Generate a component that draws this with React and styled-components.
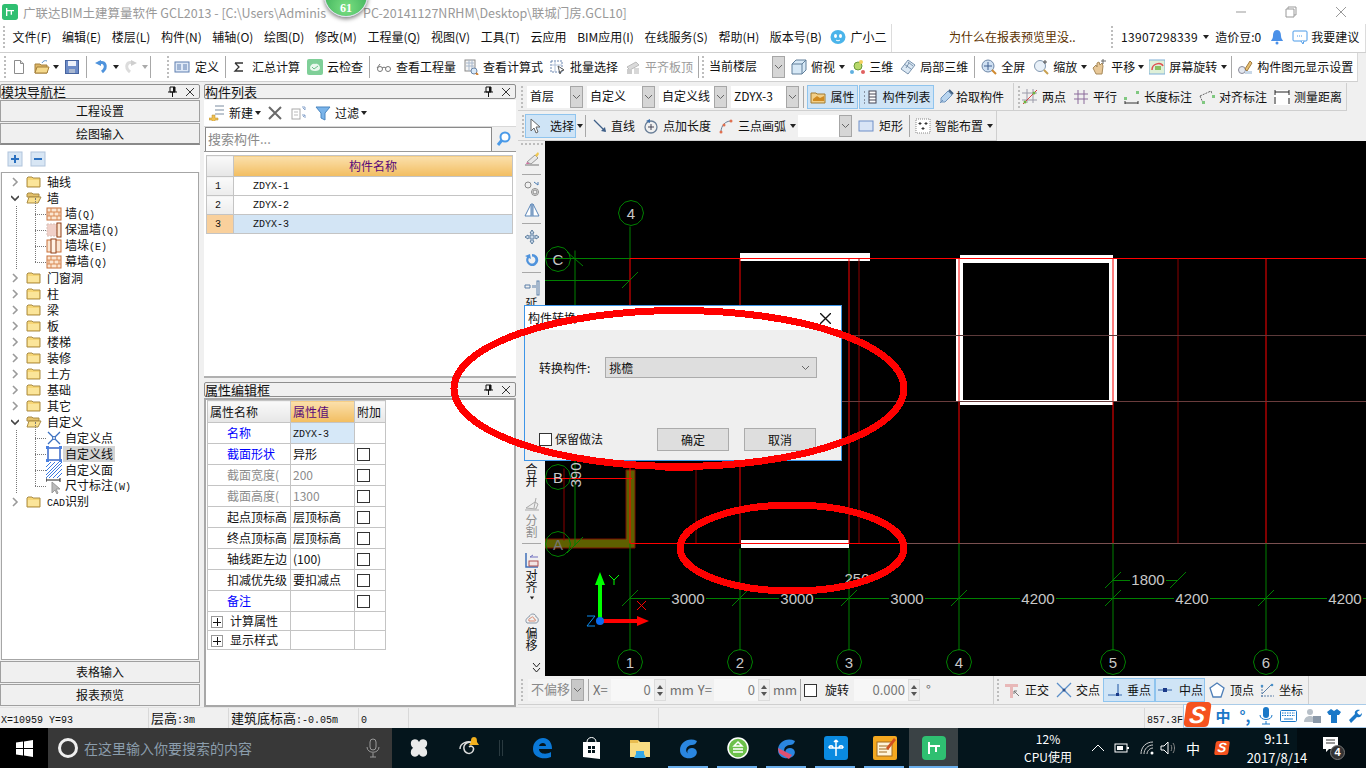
import React from 'react'
import styled, { createGlobalStyle } from 'styled-components'

const UI = '"Noto Sans CJK SC", "Noto Sans", sans-serif'

const Global = createGlobalStyle`
  html, body { margin: 0; padding: 0; background: #f0f0f0; }
  body { font: 12px/16px ${UI}; color: #111; overflow: hidden; }
  * { box-sizing: border-box; }
`

const Page = styled.div`
  position: relative;
  width: 1366px;
  height: 768px;
  overflow: hidden;
  display: flex;
  flex-direction: column;
`

/* ---------- little drawings ---------- */
const brick = (
  <>
    <rect x="1" y="2" width="14" height="12" fill="#fbe6d2" stroke="#c8703a" />
    <path d="M1 6h14M1 10h14M5 2v4M11 2v4M8 6v4M3 6v4M13 6v4M5 10v4M11 10v4" stroke="#d98a55" fill="none" />
  </>
)
const folder = (
  <>
    <path d="M1 4l1-1h4l1 1h7v9H1z" fill="#f7d676" stroke="#a98b45" />
    <rect x="2" y="6" width="11" height="6" fill="#fbe59a" />
  </>
)
const openFolder = (
  <>
    <path d="M1 4l1-1h4l1 1h6v3H1z" fill="#e3c06a" stroke="#a98b45" />
    <path d="M3 7h12l-3 6H1z" fill="#fae08e" stroke="#a98b45" />
  </>
)
const paths = {
  doc: <><path d="M3.5 1.5h6l3 3v10h-9z" fill="#fff" stroke="#8c8c8c" /><path d="M9.5 1.5v3h3" fill="#ddd" stroke="#8c8c8c" /></>,
  open: <><path d="M1 5h5l1 1h6v8H1z" fill="#dcb566" stroke="#a5803a" /><path d="M3 8h12l-2 6H1z" fill="#f5d98c" stroke="#a5803a" /><path d="M8 4c1-2 3-3 5-2" stroke="#5a90c8" fill="none" /></>,
  save: <><rect x="1.5" y="1.5" width="13" height="13" fill="#6d8cc8" stroke="#47649e" /><rect x="4" y="2" width="8" height="5" fill="#eef2fa" /><rect x="5" y="10" width="6" height="4" fill="#aab8d0" /></>,
  undo: <><path d="M5 4c6-2 9 4 3 9" stroke="#4f93dc" strokeWidth="3" fill="none" /><path d="M1 4l6-3v6z" fill="#4f93dc" /></>,
  redo: <><path d="M11 4C5 2 2 8 8 13" stroke="#dcdcdc" strokeWidth="3" fill="none" /><path d="M15 4L9 1v6z" fill="#cfcfcf" /></>,
  table: <><rect x="1" y="3" width="14" height="10" fill="#dfe9f7" stroke="#5f7fb0" /><path d="M3 6h4M3 8h4M3 10h4M9 6h4M9 8h4M9 10h4" stroke="#5f7fb0" /></>,
  sigma: <path d="M4 4h8M4 4l4 4-4 4h8" stroke="#333" strokeWidth="1.3" fill="none" />,
  cloud: <><rect x="0" y="0" width="16" height="16" rx="2" fill="#7fcf98" /><path d="M3 9c0-3 3-5 5-4 3-1 5 2 5 4s-2 3-5 3-5-1-5-3z" fill="#eaf7ee" /><path d="M5 8l2 2 4-3" stroke="#6bbf88" fill="none" /></>,
  glass: <><circle cx="4" cy="10" r="2.5" fill="none" stroke="#777" /><circle cx="12" cy="10" r="2.5" fill="none" stroke="#777" /><path d="M6 9c1-1 3-1 4 0M1 9l3-4" stroke="#777" fill="none" /></>,
  calc: <><rect x="2" y="1" width="10" height="11" fill="#f4f4f4" stroke="#8a8a8a" /><path d="M3 4h8M3 7h8M6 1v11M9 1v11" stroke="#a8b8cc" /><circle cx="11" cy="12" r="3" fill="#d8e8f8" stroke="#6a86a8" /><path d="M13 14l2 2" stroke="#d08030" strokeWidth="2" /></>,
  batch: <><rect x="1" y="2" width="11" height="11" fill="none" stroke="#6a86b0" strokeDasharray="2 1" /><path d="M1 6h11M5 2v11" stroke="#b0c0d8" /><path d="M8 7l6 4-3 1-1 3z" fill="#fff" stroke="#555" /></>,
  flat: <><path d="M2 8l9-5 3 3-9 5z" fill="#dadada" stroke="#bbb" /><rect x="2" y="10" width="5" height="5" fill="#ccc" /><rect x="9" y="9" width="5" height="6" fill="#d8d8d8" /></>,
  cube: <><path d="M1 5l4-4h10v10l-4 4H1z" fill="#d6e8f6" stroke="#607f9a" /><path d="M1 5h10v10M11 5l4-4" fill="none" stroke="#607f9a" /></>,
  three: <><circle cx="9" cy="7" r="4" fill="#b8d86a" stroke="#6a9a3a" /><circle cx="12" cy="3" r="2" fill="#f4d060" /><circle cx="3" cy="13" r="2" fill="#60b0e0" /><circle cx="14" cy="13" r="2" fill="#e06060" /></>,
  local: <><path d="M8 1l7 5-7 9-7-5z" fill="#dbe8f4" stroke="#7a93ad" /><path d="M4 5l7 5M8 3l5 4M6 9l3-5" stroke="#7a93ad" fill="none" /></>,
  full: <><circle cx="7" cy="7" r="6" fill="#cfe0f2" stroke="#6f88a8" /><path d="M7 3v8M3 7h8" stroke="#3f5f90" /><path d="M11 11l4 4" stroke="#d08a30" strokeWidth="2" /></>,
  zoom: <><circle cx="7" cy="7" r="5.5" fill="#e8f0f8" stroke="#8298b0" /><path d="M11 11l4 4" stroke="#c8a050" strokeWidth="2" /><path d="M12 1v4M10 3h4" stroke="#555" /></>,
  pan: <><path d="M2 9l3-3 1 2V4l2-1 1 3 2-2 1 3-1 8H5z" fill="#e8c898" stroke="#a88a5a" /><path d="M12 0v5M10 2h5" stroke="#666" /></>,
  spin: <><rect x="0" y="1" width="16" height="14" fill="#dff0d8" stroke="#7fb0d8" /><path d="M3 11c0-7 9-8 11-4" stroke="#e05050" strokeWidth="1.5" fill="none" /><rect x="6" y="7" width="6" height="4" fill="#8ac060" /></>,
  shown: <><circle cx="5" cy="11" r="3.5" fill="#e4e8f0" stroke="#8a8a98" /><path d="M8 10l5-8 2 2-5 8z" fill="#e8c070" stroke="#a07a40" /><rect x="8" y="12" width="7" height="3" fill="#c8d8e8" /></>,
  dots: <><rect x="1" y="1" width="14" height="14" fill="#fff" stroke="#888" strokeDasharray="1 1" /><path d="M5 4v3M3.5 5.5h3M11 4v3M9.5 5.5h3M8 9v3M6.5 10.5h3" stroke="#333" /></>,
  attr: <><path d="M1 4h5l1 1h8v9H1z" fill="#f2cf88" stroke="#a07a30" /><path d="M3 10l4-3 3 2 4-2v5H3z" fill="#d08a20" /></>,
  clist: <><path d="M2 3h2M2 7h2M2 11h2M2 14h2" stroke="#445" strokeDasharray="1 1" /><rect x="7" y="2" width="7" height="12" fill="#fff" stroke="#445" /><path d="M7 5h7M7 8h7M7 11h7" stroke="#445" /></>,
  drop: <><path d="M10 2l4 4-7 7H3v-4z" fill="#b8d4ee" stroke="#6f93bc" /><path d="M11 1l4 4" stroke="#3f5f80" strokeWidth="2" /><path d="M2 14l3-3" stroke="#6f93bc" /></>,
  two: <><path d="M5 0v14M11 0v14M0 4h15M0 11h15" stroke="#9a9aa8" /><path d="M1 15L15 1" stroke="#d84040" /><circle cx="3" cy="13" r="1.5" fill="#70b040" /><circle cx="12" cy="4" r="1.5" fill="#70b040" /></>,
  para: <path d="M5 1v14M11 1v14M1 5h14M1 10h14" stroke="#8a6a9a" fill="none" />,
  lenmark: <><rect x="0" y="8" width="3" height="3" fill="#80c880" /><rect x="12" y="2" width="3" height="3" fill="#80c880" /><path d="M1 12v3M14 12v3M1 14h13" stroke="#333" /></>,
  alignmark: <><path d="M1 7l3 7M1 7l11-5 1 3" stroke="#666" fill="none" strokeDasharray="2 1" /><rect x="3" y="12" width="3" height="3" fill="#80c880" /><rect x="13" y="6" width="3" height="3" fill="#80c880" /></>,
  measure: <><rect x="0" y="1" width="16" height="15" fill="#fff" /><path d="M1 1v5M15 1v5M1 3h14M1 8v7M15 9v6" stroke="#222" /></>,
  pick: <path d="M4 1v12l3-3 2 5 2-1-2-5h4z" fill="#fff" stroke="#666" />,
  line: <><path d="M2 2l11 11" stroke="#3f5f88" strokeWidth="1.2" /><path d="M14 14l-5-1 4-4z" fill="#3f5f88" /></>,
  addlen: <><circle cx="8" cy="9" r="6" fill="none" stroke="#6a7f98" strokeWidth="1.3" /><path d="M8 6v6M5 9h6" stroke="#445" /><path d="M3 3l4-2v4z" fill="#3f6fa8" /></>,
  arc: <><path d="M3 14C3 8 7 3 13 3" stroke="#6a7f98" fill="none" /><circle cx="3" cy="14" r="1.5" fill="#e07050" /><circle cx="13" cy="3" r="1.5" fill="#e07050" /><circle cx="6" cy="7" r="1.5" fill="#e07050" /></>,
  rect: <rect x="1" y="3" width="14" height="10" fill="#d8e4f6" stroke="#6f8fc8" />,
  brush: <><path d="M1 14h14" stroke="#777" /><path d="M3 11l8-7 3 3-7 6z" fill="#e8e8e8" stroke="#999" /><path d="M11 4l3-3 1 2-2 3z" fill="#f0c850" /><path d="M3 11l3 2-4 0z" fill="#d070a0" /></>,
  pts: <><circle cx="4" cy="5" r="3" fill="none" stroke="#888" /><circle cx="11" cy="12" r="3.5" fill="none" stroke="#888" /><circle cx="11" cy="12" r="2" fill="none" stroke="#888" /><path d="M10 2l4 3M14 5V2" stroke="#4a7ab0" fill="none" /></>,
  mirror: <><path d="M7 2v12H1zM9 2v12h6z" fill="#fff" stroke="#5a86b8" /><path d="M8 1v14" stroke="#5a86b8" /></>,
  move: <path d="M8 1l2 3H9v3h3V6l3 2-3 2V9H9v3h1l-2 3-2-3h1V9H4v1L1 8l3-2v1h3V4H6z" fill="#c8d8ea" stroke="#5f7f9f" />,
  rot: <path d="M8 3a6 6 0 1 1-5 3l-2-1 5-2 1 5-2-1a3.5 3.5 0 1 0 3-1.500z" fill="#4f93dc" />,
  ext: <><path d="M1 5h5v3H1zM9 5v3M11 5v3" stroke="#5a7fa8" fill="none" /><rect x="13" y="1" width="2" height="14" fill="none" stroke="#5a7fa8" /></>,
  cut: <><path d="M2 12l9-6 3 2-2 5z" fill="#eee" stroke="#aaa" /><path d="M1 14h14M12 2l-2 10" stroke="#aaa" /></>,
  alignL: <><path d="M2 1v14h12" stroke="#3f6fb8" strokeWidth="1.5" fill="none" /><rect x="5" y="9" width="9" height="5" fill="#f0e4e4" stroke="#b05050" /><path d="M6 5h8M6 5l3-2" stroke="#7070c0" fill="none" /></>,
  offset: <><path d="M3 13c-3-3 1-6 2-6 1-4 7-4 7 0 3 0 3 6 0 6z" fill="none" stroke="#8a98a8" /><path d="M5 11c-1-2 1-3 2-3 1-2 3-1 3 1 2 0 2 2 1 2z" fill="none" stroke="#d88a70" /></>,
  ortho: <><path d="M0 2h13v3H8v11H5V5H0z" fill="#e8b8b8" /><path d="M9 9l5 5M9 9l3 0M9 9l0 3" stroke="#777" fill="none" /></>,
  cross: <><path d="M1 1l14 14M15 1L1 15" stroke="#5a8ec8" strokeWidth="1.3" /><circle cx="8" cy="8" r="1.5" fill="#30508a" /></>,
  perp: <><path d="M1 13h14M11 2v11" stroke="#3a6cb0" strokeWidth="1.2" /><rect x="9" y="11" width="3" height="3" fill="#1a3a8a" /></>,
  mid: <><path d="M1 8h14" stroke="#5a80b8" strokeWidth="1.3" /><rect x="6" y="6" width="4" height="4" fill="#1a3a8a" /></>,
  vertex: <path d="M8 1l7 5-3 9H4L1 6z" fill="#fff" stroke="#4f7fb8" strokeWidth="1.3" />,
  coord: <><path d="M2 14h13M3 15V3" stroke="#5a7fa8" strokeDasharray="2 1" /><path d="M3 12L13 2" stroke="#5a7fa8" /><circle cx="13" cy="3" r="1.3" fill="#4a90c8" /><circle cx="3" cy="4" r="1.3" fill="#4a90c8" /></>,
  brick,
  folder,
  openFolder,
  thermal: <><rect x="1" y="2" width="10" height="12" fill="#f0d0c8" stroke="#d8c0b8" strokeDasharray="2 1" /><rect x="11" y="1" width="4" height="14" fill="#fbe6d2" stroke="#904018" /></>,
  pier: <><rect x="1" y="2" width="14" height="12" fill="#fbe6d2" stroke="#c8703a" /><rect x="5" y="1" width="5" height="14" fill="#fff2e4" stroke="#904018" /></>,
  pointX: <><path d="M2 2l12 12M14 2L2 14" stroke="#3a6fc0" strokeWidth="1.3" /><circle cx="8" cy="8" r="1.5" fill="#fff" stroke="#3a6fc0" /></>,
  lineBox: <><rect x="2" y="2" width="12" height="12" fill="none" stroke="#1a50c0" strokeWidth="1.3" /><path d="M0 0h3v3H0zM13 0h3v3h-3zM0 13h3v3H0zM13 13h3v3h-3z" fill="#4a80e0" /></>,
  hatch: <path d="M0 5L5 0M0 9l9-9M0 13L13 0M0 16L16 0M3 16L16 3M7 16l9-9M11 16l5-5" stroke="#3a7ae0" />,
  dim: <><path d="M0 2h14M0 0v4M14 0v4" stroke="#222" /><path d="M6 4v11l3-3 2 4 1-1-2-4h4z" fill="#bbb" stroke="#999" /></>,
  robot: <><ellipse cx="8" cy="8" rx="7.5" ry="7" fill="#4ab4ea" /><ellipse cx="5.5" cy="7" rx="1.5" ry="2" fill="#fff" /><ellipse cx="10.5" cy="7" rx="1.5" ry="2" fill="#fff" /><path d="M6 11c1 1 3 1 4 0" stroke="#fff" fill="none" /></>,
  bell: <><path d="M8 1c3 0 4 3 4 6s2 4 2 5H2c0-1 2-2 2-5s1-6 4-6z" fill="#4a90e8" /><circle cx="8" cy="14" r="1.5" fill="#4a90e8" /></>,
  chat: <><rect x="1" y="2" width="14" height="10" rx="1" fill="#fff" stroke="#4a9ae8" /><path d="M9 12l2 3 1-3" fill="#fff" stroke="#4a9ae8" /><path d="M5 7h6" stroke="#4a9ae8" strokeDasharray="1 1" /></>,
  plusBox: <><rect x="1" y="1" width="14" height="14" fill="#d8e6f4" stroke="#b0c4dc" /><path d="M8 4v8M4 8h8" stroke="#2a70c0" strokeWidth="2" /></>,
  minusBox: <><rect x="1" y="1" width="14" height="14" fill="#d8e6f4" stroke="#b0c4dc" /><path d="M4 8h8" stroke="#2a70c0" strokeWidth="2" /></>,
  newc: <><path d="M6 1h9M6 5h9M6 9h9" stroke="#7a8ca0" /><path d="M3 10h3v3h3v2H6v2H3v-2H0v-2h3z" fill="#f0c050" stroke="#b08a30" strokeWidth=".5" /></>,
  del: <path d="M2 2l12 12M14 2L2 14" stroke="#6a6a6a" strokeWidth="2" fill="none" />,
  copy: <><rect x="1" y="4" width="8" height="10" fill="#fff" stroke="#aaa" /><path d="M3 7h4M3 10h4" stroke="#bbb" /><path d="M11 2h3v3M11 10h3v3M14 5l-2-2M14 10l-2 2" stroke="#88a4cc" fill="none" /></>,
  filter: <path d="M1 2h14l-5 6v7l-4-2V8z" fill="#7ab4ea" stroke="#4a86c0" />,
  mag: <><circle cx="9" cy="6" r="4.5" fill="#fff" stroke="#4a9ae8" strokeWidth="2" /><path d="M6 9l-4 5" stroke="#4a9ae8" strokeWidth="3" /></>
}

const Glyph = styled.svg`
  flex: none;
  width: ${p => p.$s || 16}px;
  height: ${p => p.$s || 16}px;
  display: block;
`
const Icon = ({ n, s }) => <Glyph viewBox="0 0 16 16" $s={s}>{paths[n]}</Glyph>

const Mono = styled.span`
  font: 10px/16px "Liberation Mono", monospace;
`

const Grip = styled.i`
  flex: none;
  display: block;
  width: 2px;
  height: ${p => p.$h || 22}px;
  margin-left: ${p => p.$ml || 0}px;
  margin-right: ${p => p.$mr || 0}px;
  background: repeating-linear-gradient(#bdbdbd 0 2px, transparent 2px 4px);
`
const Sep = styled.i`
  flex: none;
  display: block;
  width: 1px;
  height: 22px;
  margin-left: ${p => p.$ml || 0}px;
  background: #a8a8a8;
`
const Caret = styled.i`
  flex: none;
  display: block;
  width: 0;
  height: 0;
  margin-left: ${p => p.$ml ?? 4}px;
  border: 3.5px solid transparent;
  border-bottom: 0;
  border-top: 4px solid ${p => (p.$off ? '#aaa' : '#222')};
`
const Tool = styled.div`
  flex: none;
  display: flex;
  align-items: center;
  height: 24px;
  gap: ${p => p.$gap ?? 4}px;
  margin-left: ${p => p.$ml || 0}px;
  white-space: nowrap;
  letter-spacing: ${p => p.$ls || 0}px;
  color: ${p => (p.$off ? '#9b9b9b' : '#111')};
`
const ActiveTool = styled(Tool)`
  justify-content: center;
  width: ${p => p.$w}px;
  border: 1px solid #8fc4ee;
  background: #cfe4f6;
`
const Combo = styled.div`
  flex: none;
  display: flex;
  width: ${p => p.$w}px;
  height: 22px;
  margin-left: ${p => p.$ml || 0}px;
  background: #fff;
  line-height: 20px;
  padding-left: 3px;
  white-space: nowrap;
  & > span { flex: 1; overflow: hidden; }
`
const ComboBtn = styled.b`
  flex: none;
  width: 13px;
  display: flex;
  align-items: center;
  justify-content: center;
  background: #d6d6d6;
  border: 1px solid #a6a6a6;
`
const Chevron = () => (
  <svg width="9" height="6" viewBox="0 0 9 6"><path d="M1 1l3.5 3.5L8 1" stroke="#666" fill="none" /></svg>
)
const Select = ({ w, ml, children }) => (
  <Combo $w={w} $ml={ml}><span>{children}</span><ComboBtn><Chevron /></ComboBtn></Combo>
)

/* ---------- title and menu ---------- */
const TitleBar = styled.div`
  height: 24px;
  flex: none;
  background: #fff;
  color: #999;
  font-size: 12.5px;
  line-height: 23px;
  display: flex;
  align-items: center;
  padding-left: 2px;
  gap: 5px;
`
const AppLogo = styled.svg`
  width: 16px;
  height: 16px;
  flex: none;
`
const TitleHead = styled.span`
  flex: none;
  width: 302px;
  white-space: nowrap;
`
const TitleTail = styled.span`
  flex: 1;
  margin-left: 33px;
  white-space: nowrap;
`
const WinBtn = styled.svg`
  flex: none;
  width: 12px;
  height: 12px;
  margin-right: 33px;
  stroke: #999;
  fill: none;
  &:last-child { margin-right: 19px; }
`
const MenuRow = styled.div`
  height: 29px;
  flex: none;
  display: flex;
  background: #fff;
  border-bottom: 1px solid #cfcfcf;
`
const MenuBox = styled.div`
  width: 892px;
  display: flex;
  align-items: center;
  padding: 0 0 2px 3px;
  gap: 10.6px;
  border-right: 1px solid #dcdcdc;
  white-space: nowrap;
`
const Tip = styled.div`
  flex: 1;
  padding-left: 57px;
  line-height: 26px;
  color: #5c3200;
`
const AccountBox = styled.div`
  width: 256px;
  display: flex;
  align-items: center;
  padding: 0 0 2px 1px;
  white-space: nowrap;
  border-right: 1px solid #dcdcdc;
`
const Bar = styled.div`
  height: 29px;
  flex: none;
  display: flex;
  align-items: center;
  width: 1358px;
  background: #fff;
  border-right: 1px solid #d8d8d8;
  border-bottom: 1px solid #cfcfcf;
  padding-left: 4px;
`

/* ---------- workspace ---------- */
const Workspace = styled.div`
  flex: 1;
  display: flex;
  min-height: 0;
  background: #f0f0f0;
`
const Column = styled.div`
  flex: none;
  width: ${p => p.$w}px;
  margin-left: ${p => p.$ml || 0}px;
  display: flex;
  flex-direction: column;
`
const DockHead = styled.div`
  flex: none;
  height: 15px;
  margin-top: ${p => p.$mt ?? 2}px;
  display: flex;
  align-items: center;
  font-size: 13px;
  line-height: 14px;
  border: 1px solid #8e8e8e;
  border-radius: 2px;
  background: #f0f0f0;
  padding-right: 5px;
  gap: 9px;
  & > span { flex: 1; white-space: nowrap; }
`
const Pin = () => (
  <svg width="9" height="11" viewBox="0 0 9 11"><path d="M2 1h5v5H2zM0 6h9M4.5 6v5" stroke="#111" fill="none" /><rect x="5" y="1" width="2" height="5" fill="#111" /></svg>
)
const CloseX = ({ s = 8, c = '#333' }) => (
  <svg width={s} height={s} viewBox="0 0 8 8"><path d="M0 0l8 8M8 0L0 8" stroke={c} fill="none" /></svg>
)
const NavBtn = styled.div`
  flex: none;
  height: ${p => p.$h || 22}px;
  margin-top: 1px;
  text-align: center;
  line-height: 20px;
  border: 1px solid #a0a0a0;
  border-bottom: ${p => (p.$on ? '2px solid #8a8a8a' : '1px solid #a0a0a0')};
  background: #f0f0f0;
`
const TreeTools = styled.div`
  flex: none;
  height: 27px;
  display: flex;
  align-items: center;
  padding-left: 7px;
  gap: 7px;
  background: #fff;
`
const TreeBox = styled.div`
  height: 488px;
  flex: none;
  margin: 0 1px;
  padding-top: 1px;
  background: #fff;
  border: 1px solid #a6a6a6;
`
const TreeRow = styled.div`
  position: relative;
  height: 16px;
  display: flex;
  align-items: center;
  white-space: nowrap;
  padding-left: ${p => (p.$child ? 44 : 9)}px;
  background: ${p => (p.$child ? 'repeating-linear-gradient(#777 0 1px, transparent 1px 2px) 14px 0 / 1px 100% no-repeat' : 'none')};
  &::before {
    content: '';
    display: ${p => (p.$child ? 'block' : 'none')};
    position: absolute;
    left: 33px;
    top: 8px;
    width: 11px;
    border-top: 1px dotted #777;
  }
  &::after {
    content: '';
    display: ${p => (p.$child ? 'block' : 'none')};
    position: absolute;
    left: 33px;
    top: -8px;
    height: 16px;
    border-left: 1px dotted #777;
  }
`
const Twist = styled.svg`
  flex: none;
  width: 8px;
  height: 10px;
  margin-right: 7px;
  stroke: #9a9a9a;
  fill: none;
  stroke-width: 1.6;
`
const RowIcon = styled.span`
  display: flex;
  margin-right: ${p => p.$mr}px;
`
const TreeLabel = styled.span`
  padding: 0 ${p => (p.$on ? 2 : 0)}px;
  margin-left: ${p => (p.$on ? -2 : 0)}px;
  background: ${p => (p.$on ? '#d4d4d4' : 'transparent')};
`
const Panel = styled.div`
  flex: ${p => p.$flex || 'none'};
  margin-top: 1px;
  background: #fff;
  border: ${p => (p.$border ? '2px solid #a8a8a8' : '0')};
  ${p => (p.$border ? '' : 'border-bottom: 2px solid #b0b0b0;')}
`
const ListTools = styled.div`
  height: 27px;
  display: flex;
  align-items: center;
  padding-left: 5px;
  background: #fff;
  border-bottom: 1px solid #d8d8d8;
`
const SearchRow = styled.div`
  height: 25px;
  display: flex;
  background: #f4f4f4;
  border-bottom: 1px solid #999;
`
const SearchInput = styled.div`
  flex: 1;
  margin-left: 1px;
  border: 1px solid #8a8a8a;
  border-bottom: 0;
  background: #fff;
  color: #8a8a8a;
  padding-left: 2px;
  font-size: 13px;
  line-height: 22px;
`
const SearchBtn = styled.div`
  width: 24px;
  display: flex;
  align-items: center;
  justify-content: center;
  background: #f0f0f0;
`
const Grid = styled.table`
  border-collapse: collapse;
  table-layout: fixed;
  background: #fff;
  width: ${p => p.$w}px;
  margin: ${p => p.$m};
  & td, & th { border: 1px solid #c4c4c4; padding: 0; font-weight: 400; overflow: hidden; white-space: nowrap; }
`
const HeadCell = styled.th`
  height: ${p => p.$h || 20}px;
  font-size: 12px;
  text-align: ${p => (p.$left ? 'left' : 'center')};
  padding-left: ${p => (p.$left ? 2 : 0)}px !important;
  color: ${p => (p.$hot ? '#5a0a78' : '#111')};
  background: linear-gradient(${p => (p.$hot ? '#fbe0ac, #f2bd60' : '#fafafa, #e6e6e6')});
`
const NumCell = styled.td`
  text-align: left;
  padding: 1px 0 0 8px !important;
  background: ${p => (p.$on ? '#f9d09c' : 'linear-gradient(#fafafa, #ececec)')};
  font: 10px "Liberation Mono", monospace;
`
const NameCell = styled.td`
  padding: 1px 0 0 19px !important;
  background: ${p => (p.$on ? '#d3e5f5' : '#fff')};
  font: 10px "Liberation Mono", monospace;
`
const PropRow = styled.tr`
  height: ${p => p.$h}px;
`
const PropName = styled.td`
  padding-left: ${p => (p.$tree ? 0 : 19)}px !important;
  color: ${p => (p.$c === 'blue' ? '#0000ff' : p.$c === 'gray' ? '#8c8c8c' : '#111')};
  font-size: 12px;
`
const PropVal = styled.td`
  padding-left: 2px !important;
  color: ${p => (p.$gray ? '#8c8c8c' : '#111')};
  background: ${p => (p.$on ? '#d6e8f8' : '#fff')};
  font-size: 12px;
`
const PropChk = styled.td`
  text-align: left;
  padding-left: 2px !important;
`
const Check = styled.i`
  display: block;
  flex: none;
  width: 13px;
  height: 13px;
  margin-left: ${p => p.$ml || 0}px;
  background: #fff;
  border: 1px solid #333;
`
const Expand = styled.i`
  display: inline-block;
  width: 12px;
  height: 12px;
  margin: 0 7px 0 3px;
  border: 1px solid #9a9a9a;
  vertical-align: -2px;
  background:
    linear-gradient(#111, #111) center / 8px 1px no-repeat,
    linear-gradient(#111, #111) center / 1px 8px no-repeat;
`

/* ---------- right side ---------- */
const BandRow = styled.div`
  flex: none;
  display: flex;
  height: ${p => p.$h}px;
  margin-top: ${p => p.$mt || 0}px;
`
const Band = styled.div`
  flex: none;
  display: flex;
  align-items: center;
  width: ${p => p.$w}px;
  padding-left: 3px;
  border-right: 1px solid #cfcfcf;
  border-bottom: 1px solid #cfcfcf;
  background: #f0f0f0;
`
const CanvasRow = styled.div`
  flex: none;
  height: 535px;
  display: flex;
`
const VBar = styled.div`
  flex: none;
  width: 27px;
  display: flex;
  flex-direction: column;
  align-items: center;
  overflow: hidden;
  padding: 2px 0;
`
const VGrip = styled.i`
  display: block;
  width: 22px;
  height: 2px;
  margin-bottom: 5px;
  background: repeating-linear-gradient(90deg, #bdbdbd 0 2px, transparent 2px 4px);
`
const VIcon = styled.div`
  flex: none;
  margin-top: ${p => p.$mt || 0}px;
`
const VLine = styled.i`
  flex: none;
  display: block;
  width: 19px;
  height: 1px;
  background: #a8a8a8;
  margin-top: ${p => p.$mt || 0}px;
`
const VText = styled.div`
  flex: none;
  width: 14px;
  text-align: center;
  line-height: 12px;
  margin-top: ${p => p.$mt || 0}px;
  color: ${p => (p.$off ? '#8f8f8f' : '#111')};
`
const VCaret = styled(Caret)`
  margin-left: 0;
  margin-top: 3px;
  transform: scale(.7);
`
const VMore = styled.svg`
  flex: none;
  width: 9px;
  height: 12px;
  margin: 11px 0 0 9px;
  stroke: #222;
  fill: none;
`
const VFill = styled.div`
  flex: 1;
`
const Drawing = styled.svg`
  flex: 1;
  display: block;
  width: 821px;
  height: 535px;
  background: #000;
`
const NumField = styled.div`
  flex: none;
  display: flex;
  width: ${p => p.$w}px;
  height: 22px;
  margin-left: ${p => p.$ml || 0}px;
  color: #777;
  font-size: 13px;
  line-height: 21px;
  text-align: right;
  & > span { flex: 1; background: #f7f7f7; padding-right: 3px; }
`
const Spin = styled.b`
  flex: none;
  width: 12px;
  display: flex;
  flex-direction: column;
  align-items: center;
  justify-content: space-around;
  padding: 3px 0;
  background: #ededed;
  border: 1px solid #dcdcdc;
  & > i { display: block; border: 3px solid transparent; }
  & > i:first-child { border-top: 0; border-bottom: 4px solid #555; }
  & > i:last-child { border-bottom: 0; border-top: 4px solid #555; }
`
const Field = ({ w, ml, v }) => (
  <NumField $w={w} $ml={ml}><span>{v}</span><Spin><i /><i /></Spin></NumField>
)
const Faint = styled.span`
  flex: none;
  color: #6e6e6e;
  font-size: 13px;
  margin-left: ${p => p.$ml || 0}px;
`
const OffsetSelect = styled(Combo)`
  background: #f4f4f4;
  color: #8a8a8a;
  font-size: 13px;
  & > b { background: #c8c8c8; }
`
const BottomBand = styled(Band)`
  height: 29px;
  border-bottom: 1px solid #cfcfcf;
`

/* ---------- status and task bars ---------- */
const StatusBar = styled.div`
  height: 21px;
  flex: none;
  display: flex;
  background: #f0f0f0;
  border-top: 1px solid #e4e4e4;
  padding-left: 1px;
`
const StatusCell = styled.div`
  flex: none;
  width: ${p => p.$w}px;
  white-space: nowrap;
  line-height: 19px;
  padding-right: 2px;
  border-right: ${p => (p.$last ? '0' : '1px solid #d9d9d9')};
  & + & { padding-left: 2px; }
  font-size: 13px;
  overflow: hidden;
`
const StatusMono = styled.span`
  font: 10px/19px "Liberation Mono", monospace;
`
const Taskbar = styled.div`
  height: 40px;
  flex: none;
  display: flex;
  align-items: center;
  color: #fff;
  background: linear-gradient(90deg, #04151c 0 1297px, #020c11 1297px);
`
const StartBtn = styled.div`
  width: 48px;
  height: 40px;
  flex: none;
  background: #000;
  display: flex;
  align-items: center;
  justify-content: center;
`
const SearchBox = styled.div`
  width: 344px;
  height: 40px;
  flex: none;
  background: #383838;
  display: flex;
  align-items: center;
  padding-left: 10px;
  color: #8b9dac;
  font-size: 14px;
  white-space: nowrap;
  & > span { flex: 1; margin-left: 6px; }
  & > svg { margin-right: 12px; }
`
const Cortana = styled.i`
  flex: none;
  display: block;
  width: 20px;
  height: 20px;
  border-radius: 50%;
  border: 3px solid #eee;
`
const Tile = styled.div`
  position: relative;
  flex: none;
  width: 49px;
  height: 40px;
  margin-left: ${p => p.$ml || 0}px;
  display: flex;
  align-items: center;
  justify-content: center;
  background: ${p => (p.$active ? '#3a4245' : 'transparent')};
  &::after {
    content: '';
    display: ${p => (p.$open ? 'block' : 'none')};
    position: absolute;
    bottom: 0;
    left: ${p => (p.$active ? 0 : 4)}px;
    right: ${p => (p.$active ? 0 : 5)}px;
    height: 2px;
    background: #6aaeec;
  }
`
const TileDivider = styled.i`
  flex: none;
  display: block;
  width: 4px;
  height: 16px;
  margin: 0 14px 0 7px;
  border-left: 1px solid #2a3a40;
  border-right: 1px solid #2a3a40;
`
const TaskPic = styled.svg`
  width: 24px;
  height: 24px;
  display: block;
`
const TrayBit = styled.div`
  position: relative;
  flex: none;
  display: flex;
  flex-direction: column;
  align-items: center;
  justify-content: center;
  width: ${p => p.$w}px;
  margin-left: ${p => p.$ml}px;
  font-size: ${p => p.$fs || 12}px;
  line-height: ${p => p.$lh || 18}px;
  white-space: nowrap;
`
const NotifCount = styled.span`
  position: absolute;
  left: 8px;
  top: 9px;
  width: 15px;
  height: 15px;
  border-radius: 50%;
  background: #333;
  border: 1px solid #777;
  text-align: center;
  font: 700 11px/13px "Liberation Sans", sans-serif;
`

/* ---------- things lying over the window ---------- */
const Badge = styled.div`
  position: absolute;
  left: 324px;
  top: -27px;
  width: 44px;
  height: 44px;
  border-radius: 50%;
  border: 1px solid #dde;
  background: radial-gradient(circle at 50% 80%, #7adf82, #1f9a47);
  box-shadow: 0 2px 4px rgba(0, 0, 0, .5);
  color: #fff;
  font: 700 12px/16px "Liberation Serif", serif;
  text-align: center;
  padding-top: 26px;
`
const Dialog = styled.div`
  position: absolute;
  left: 524px;
  top: 305px;
  width: 318px;
  height: 156px;
  background: #efefef;
  border: 1px solid #3d95e8;
  display: flex;
  flex-direction: column;
`
const DialogTitle = styled.div`
  flex: none;
  height: 24px;
  background: #fff;
  display: flex;
  align-items: center;
  justify-content: space-between;
  padding: 0 10px 0 3px;
`
const DialogBody = styled.div`
  flex: 1;
  display: flex;
  flex-direction: column;
  justify-content: space-between;
  padding: 27px 24px 9px 14px;
`
const FormRow = styled.div`
  display: flex;
  align-items: center;
  white-space: nowrap;
`
const FormSelect = styled.div`
  flex: none;
  display: flex;
  align-items: center;
  justify-content: space-between;
  width: 212px;
  height: 21px;
  margin-left: 15px;
  padding: 0 6px 0 3px;
  background: #dedede;
  border: 1px solid #ababab;
`
const DialogBtn = styled.div`
  flex: none;
  width: 72px;
  height: 23px;
  margin-left: ${p => p.$ml}px;
  background: #dedede;
  border: 1px solid #ababab;
  text-align: center;
  line-height: 21px;
`
const ImeBar = styled.div`
  position: absolute;
  left: 1183px;
  top: 704px;
  width: 183px;
  height: 24px;
  background: #fff;
  border: 1px solid #a9cbe8;
  border-right: 0;
  display: flex;
  align-items: center;
  padding-left: 27px;
  color: #1a78c8;
`
const ImeGlyph = styled.b`
  flex: none;
  width: ${p => p.$w || 22}px;
  display: flex;
  justify-content: center;
  font: 700 15px/20px ${UI};
`
const SogouLogo = styled.div`
  position: absolute;
  left: ${p => p.$x}px;
  top: ${p => p.$y}px;
  width: ${p => p.$s}px;
  height: ${p => p.$s}px;
  border-radius: ${p => p.$s / 6}px;
  background: #f5521e;
  transform: skewX(-8deg);
  color: #fff;
  font: italic 700 ${p => p.$s * 0.95}px/${p => p.$s}px "Liberation Sans", sans-serif;
  text-align: center;
`
const Notes = styled.svg`
  position: absolute;
  left: 0;
  top: 0;
  width: 1366px;
  height: 768px;
  pointer-events: none;
`

/* ---------- data ---------- */
const menus = ['文件(F)', '编辑(E)', '楼层(L)', '构件(N)', '辅轴(O)', '绘图(D)', '修改(M)', '工程量(Q)', '视图(V)', '工具(T)', '云应用', 'BIM应用(I)', '在线服务(S)', '帮助(H)', '版本号(B)']

const tree = [
  { t: '轴线' },
  { t: '墙', open: true },
  { t: '墙', m: '(Q)', i: 'brick' },
  { t: '保温墙', m: '(Q)', i: 'thermal' },
  { t: '墙垛', m: '(E)', i: 'pier' },
  { t: '幕墙', m: '(Q)', i: 'brick' },
  { t: '门窗洞' }, { t: '柱' }, { t: '梁' }, { t: '板' }, { t: '楼梯' }, { t: '装修' }, { t: '土方' }, { t: '基础' }, { t: '其它' },
  { t: '自定义', open: true },
  { t: '自定义点', i: 'pointX' },
  { t: '自定义线', i: 'lineBox', on: true },
  { t: '自定义面', i: 'hatch' },
  { t: '尺寸标注', m: '(W)', i: 'dim' },
  { t: '识别', pre: 'CAD' }
]

const props = [
  ['名称', 'ZDYX-3', 'blue', 'mono'],
  ['截面形状', '异形', 'blue', '', true],
  ['截面宽度(', '200', 'gray', 'gray', true],
  ['截面高度(', '1300', 'gray', 'gray', true],
  ['起点顶标高', '层顶标高', '', '', true],
  ['终点顶标高', '层顶标高', '', '', true],
  ['轴线距左边', '(100)', '', '', true],
  ['扣减优先级', '要扣减点', '', '', true],
  ['备注', '', 'blue', '', true]
]

const RED = '#ff0000'
const DARK = '#8b0000'
const GREEN = '#008000'

const segs = [
  [630, 226, 630, 258, GREEN], [545, 258, 630, 258, GREEN], [545, 280, 630, 280, GREEN], [575, 250, 575, 545, GREEN],
  [630, 258, 1366, 258, RED], [630, 258, 630, 543, RED], [740, 258, 740, 543, RED], [849, 258, 849, 543, RED],
  [859, 258, 859, 543, DARK], [696, 468, 696, 543, DARK], [564, 468, 564, 540, DARK], [1178, 258, 1178, 543, DARK],
  [959, 258, 959, 543, RED], [1113, 258, 1113, 543, RED], [1266, 258, 1266, 543, RED],
  [842, 335, 1366, 335, '#5c3a3a'], [842, 401, 1366, 401, '#6a3c3c'], [630, 543, 905, 543, RED], [905, 543, 1366, 543, '#7a5050'],
  [545, 478, 632, 478, RED],
  [630, 543, 630, 650, GREEN], [740, 548, 740, 650, GREEN], [849, 548, 849, 650, GREEN], [959, 543, 959, 650, GREEN], [1113, 543, 1113, 650, GREEN], [1266, 543, 1266, 650, GREEN],
  [630, 598, 1366, 598, GREEN], [1113, 580, 1178, 580, GREEN]
]
const ticks = [[630, 598], [740, 598], [849, 598], [959, 598], [1113, 598], [1266, 598], [1113, 580], [1178, 580], [630, 280], [575, 545]]
const bubbles = [[631, 213, '4'], [558, 259, 'C'], [558, 477, 'B'], [558, 544, 'A'], [630, 662, '1'], [740, 662, '2'], [849, 662, '3'], [959, 662, '4'], [1113, 662, '5'], [1266, 662, '6']]
const dims = [[688, '3000'], [797, '3000'], [907, '3000'], [1038, '4200'], [1192, '4200'], [1345, '4200']]

const ring = (cx, cy, r) => Array.from({ length: 12 }, (_, i) => {
  const a = (i / 12) * Math.PI * 2
  return `${(cx + r * Math.cos(a)).toFixed(1)},${(cy + r * Math.sin(a)).toFixed(1)}`
}).join(' ')

const CadText = styled.text`
  font: 15px "Liberation Sans", sans-serif;
  fill: ${p => p.$dim ? '#777' : '#c8c8c8'};
  text-anchor: middle;
  dominant-baseline: central;
`

const CadView = () => (
  <Drawing viewBox="545 141 821 535">
    <rect x="740" y="253" width="130" height="8" fill="#fff" />
    <path d="M960 255h153v3h4v143h-4v4H960v-4h-4V258h4z M963 263v137h146V263z" fill="#fff" fillRule="evenodd" />
    <rect x="741" y="540" width="108" height="8" fill="#fff" />
    <rect x="665" y="468" width="28" height="3" fill={RED} />
    <path d="M626 470h9v78H545v-9h81z" fill="#5e6000" stroke="#7a1000" />
    {segs.map((s, i) => <line key={i} x1={s[0]} y1={s[1] + 0.5} x2={s[2]} y2={s[3] + 0.5} stroke={s[4]} />)}
    {ticks.map((t, i) => <line key={i} x1={t[0] - 8} y1={t[1] + 8} x2={t[0] + 8} y2={t[1] - 8} stroke={GREEN} />)}
    <line x1="567" y1="252" x2="583" y2="266" stroke={GREEN} />
    {bubbles.map((b, i) => (
      <g key={i}>
        <polygon points={ring(b[0], b[1], 12.5)} fill="none" stroke={GREEN} />
        <CadText x={b[0]} y={b[1]} $dim={b[2] === 'A'}>{b[2]}</CadText>
      </g>
    ))}
    {dims.map((d, i) => (
      <g key={i}>
        <rect x={d[0] - 18} y="590" width="36" height="16" fill="#000" />
        <CadText x={d[0]} y="598">{d[1]}</CadText>
      </g>
    ))}
    <rect x="1130" y="572" width="36" height="16" fill="#000" />
    <CadText x="1148" y="579">1800</CadText>
    <CadText x="857" y="578">250</CadText>
    <CadText x="575" y="475" transform="rotate(-90 575 475)">390</CadText>
    <path d="M598 621V585h-3l5-13 5 13h-3v36z" fill="#00ff00" />
    <path d="M600 619h37v-3l12 5-12 5v-3h-37z" fill={RED} />
    <circle cx="600" cy="621" r="4" fill="#0a6cf0" />
    <path d="M609 575l5 5 5-5M614 580v5" stroke="#00ff00" fill="none" />
    <path d="M637 601l9 9M646 601l-9 9" stroke={RED} fill="none" />
    <path d="M587 616h8l-8 10h8" stroke="#0a8cf0" fill="none" />
  </Drawing>
)

const WinLogo = () => (
  <svg width="17" height="17" viewBox="0 0 17 17"><path d="M0 2.5l7-1v6.5H0zM8 1.4L17 0v8H8zM0 9h7v6.5l-7-1zM8 9h9v8l-9-1.4z" fill="#fff" /></svg>
)

const apps = {
  fan: <path d="M12 12C7 14 3 11 4 6c1-3 6-4 8 0 2-4 7-3 8 0 1 5-3 8-8 6zm0 0c5-2 9 1 8 6-1 3-6 4-8 0-2 4-7 3-8 0-1-5 3-8 8-6z" fill="#eaeaea" />,
  swirl: <><path d="M4 13c0-6 8-9 13-6-5-2-10 1-9 6s7 6 9 2-2-6-4-4" stroke="#ddd" strokeWidth="1.5" fill="none" /><path d="M18 1c3 0 3 3 3 5l2 3H13l2-3c0-2 0-5 3-5z" fill="#f2b01e" /></>,
  edge: <path d="M3 13C3 6 8 2 13 2c6 0 9 5 9 11H9c0 5 7 6 12 3v5c-7 3-18 1-18-8zm6-3h7c0-4-6-4-7 0z" fill="#0a78d7" />,
  store: <><path d="M4 6h17v17l-17-2z" fill="#fff" /><path d="M8 6c0-6 9-6 9 0" stroke="#fff" fill="none" /><path d="M9 10h3v3H9zM13 10h3v3h-3zM9 14h3v3H9zM13 14h3v3h-3z" fill="#04151c" /></>,
  files: <><path d="M2 4h8l2 2h10v15H2z" fill="#f8dc82" /><path d="M2 4h8v3H2z" fill="#e8bc50" /><path d="M8 15h8v3l2 4H6l2-4z" fill="#35a8e8" /></>,
  gcloud: <path d="M20 5C12 1 3 6 3 14s9 10 14 7 3-9-2-9-6 5-3 6c-5-2-3-9 3-9 2 0 4-1 5-4z" fill="#2a86e0" />,
  globe: <><circle cx="12" cy="12" r="10" fill="#6cc04a" stroke="#fff" strokeWidth="1.5" /><path d="M8 10l4-4 4 4zM7 13h10M7 16h10" stroke="#fff" strokeWidth="1.5" fill="none" /></>,
  gband: <><path d="M20 5C12 1 3 6 3 14s9 10 14 7 3-9-2-9-6 5-3 6c-5-2-3-9 3-9 2 0 4-1 5-4z" fill="#2a86e0" /><path d="M3 12l14 7-3 4-10-6z" fill="#e05070" /></>,
  plus: <><rect x="0" y="0" width="24" height="24" rx="3" fill="#0a8ae0" /><path d="M12 4v16M5 12h14M12 4l-2 2M12 4l2 2M5 12c0-3 4-3 4 0M19 12c0-3-4-3-4 0" stroke="#fff" strokeWidth="1.5" fill="none" /></>,
  note: <><rect x="0" y="0" width="24" height="24" rx="2" fill="#f4a820" /><rect x="4" y="6" width="15" height="14" fill="#fff3d8" stroke="#a06a20" /><path d="M6 10h10M6 13h10M6 16h8" stroke="#a06a20" /><path d="M13 12l8-10 2 2-8 10z" fill="#d05020" /></>,
  app: <><rect x="0" y="0" width="24" height="24" rx="4" fill="#2fbf71" /><path d="M7 6v12M7 10h11M14 10v6" stroke="#fff" strokeWidth="2" fill="none" /></>
}
const Pic = ({ n }) => <TaskPic viewBox="0 0 24 24">{apps[n]}</TaskPic>

export default function App() {
  return (
    <Page>
      <Global />
      <TitleBar>
        <AppLogo viewBox="0 0 24 24">{apps.app}</AppLogo>
        <TitleHead>广联达BIM土建算量软件 GCL2013 - [C:\Users\Adminis</TitleHead>
        <TitleTail>PC-20141127NRHM\Desktop\联城门房.GCL10]</TitleTail>
        <WinBtn viewBox="0 0 12 12"><path d="M1 6h10" /></WinBtn>
        <WinBtn viewBox="0 0 12 12"><path d="M1 3h8v8H1zM3 3V1h8v8H9" /></WinBtn>
        <WinBtn viewBox="0 0 12 12"><path d="M1 1l10 10M11 1L1 11" /></WinBtn>
      </TitleBar>

      <MenuRow>
        <MenuBox>
          <Grip $mr={-3} />
          {menus.map(m => <span key={m}>{m}</span>)}
          <Tool $ml={-2}><Icon n="robot" />广小二</Tool>
        </MenuBox>
        <Tip>为什么在报表预览里没..</Tip>
        <AccountBox>
          <Grip />
          <Tool $ml={8} $ls={0.35}>13907298339</Tool>
          <Caret $ml={5} />
          <Tool $ml={6}>造价豆:0</Tool>
          <Tool $ml={8}><Icon n="bell" /></Tool>
          <Tool $ml={7} $gap={3}><Icon n="chat" />我要建议</Tool>
        </AccountBox>
      </MenuRow>

      <Bar>
        <Grip />
        <Tool $ml={5}><Icon n="doc" /></Tool>
        <Tool $ml={7}><Icon n="open" /></Tool><Caret $ml={3} />
        <Tool $ml={5}><Icon n="save" /></Tool>
        <Sep $ml={6} />
        <Tool $ml={7}><Icon n="undo" /></Tool><Caret $ml={3} />
        <Tool $ml={3}><Icon n="redo" /></Tool><Caret $ml={4} $off />
        <Sep $ml={2} />
        <Grip $ml={16} />
        <Tool $ml={5} $gap={5}><Icon n="table" />定义</Tool>
        <Sep $ml={6} />
        <Tool $ml={5} $gap={5}><Icon n="sigma" />汇总计算</Tool>
        <Tool $ml={7}><Icon n="cloud" />云检查</Tool>
        <Sep $ml={6} />
        <Tool $ml={6}><Icon n="glass" />查看工程量</Tool>
        <Tool $ml={7}><Icon n="calc" />查看计算式</Tool>
        <Tool $ml={7}><Icon n="batch" />批量选择</Tool>
        <Tool $ml={7} $off><Icon n="flat" />平齐板顶</Tool>
        <Sep $ml={5} />
        <Grip $ml={3} />
        <Select w={79} ml={2}>当前楼层</Select>
        <Tool $ml={6}><Icon n="cube" />俯视</Tool><Caret />
        <Tool $ml={4}><Icon n="three" />三维</Tool>
        <Tool $ml={7}><Icon n="local" />局部三维</Tool>
        <Sep $ml={6} />
        <Tool $ml={6}><Icon n="full" />全屏</Tool>
        <Tool $ml={8}><Icon n="zoom" />缩放</Tool><Caret />
        <Tool $ml={4}><Icon n="pan" />平移</Tool><Caret $ml={3} />
        <Tool $ml={5}><Icon n="spin" />屏幕旋转</Tool><Caret />
        <Sep $ml={4} />
        <Tool $ml={5}><Icon n="shown" />构件图元显示设置</Tool>
      </Bar>

      <Workspace>
        <Column $w={200}>
          <DockHead><span>模块导航栏</span><Pin /><CloseX /></DockHead>
          <NavBtn>工程设置</NavBtn>
          <NavBtn $on>绘图输入</NavBtn>
          <TreeTools><Icon n="plusBox" /><Icon n="minusBox" /></TreeTools>
          <TreeBox>
            {tree.map(r => {
              const isChild = !!r.i
              return (
                <TreeRow key={r.t + (r.m || '')} $child={isChild}>
                  {!isChild && (
                    <Twist viewBox="0 0 8 10">
                      {r.open ? <path d="M0 3l4 4 4-4" stroke="#444" /> : <path d="M2 1l4 4-4 4" />}
                    </Twist>
                  )}
                  <RowIcon $mr={isChild ? 3 : 5}><Icon n={r.i || (r.open ? 'openFolder' : 'folder')} /></RowIcon>
                  <TreeLabel $on={r.on}>{r.pre && <Mono>{r.pre}</Mono>}{r.t}{r.m && <Mono>{r.m}</Mono>}</TreeLabel>
                </TreeRow>
              )
            })}
          </TreeBox>
          <NavBtn>表格输入</NavBtn>
          <NavBtn>报表预览</NavBtn>
        </Column>

        <Column $w={312} $ml={4}>
          <DockHead><span>构件列表</span><Pin /><CloseX /></DockHead>
          <Panel>
            <ListTools>
              <Tool $gap={4} $ml={0}><Icon n="newc" />新建</Tool><Caret $ml={2} />
              <Tool $ml={6}><Icon n="del" /></Tool>
              <Tool $ml={8}><Icon n="copy" /></Tool>
              <Tool $ml={8} $gap={4}><Icon n="filter" />过滤</Tool><Caret $ml={2} />
            </ListTools>
            <SearchRow>
              <SearchInput>搜索构件...</SearchInput>
              <SearchBtn><Icon n="mag" /></SearchBtn>
            </SearchRow>
            <Grid $w={306} $m="3px 2px 142px 2px">
              <colgroup><col width="27" /><col width="279" /></colgroup>
              <thead><tr><HeadCell $h={21} /><HeadCell $h={21} $hot>构件名称</HeadCell></tr></thead>
              <tbody>
                {['ZDYX-1', 'ZDYX-2', 'ZDYX-3'].map((n, i) => (
                  <PropRow key={n} $h={19}>
                    <NumCell $on={i === 2}>{i + 1}</NumCell>
                    <NameCell $on={i === 2}>{n}</NameCell>
                  </PropRow>
                ))}
              </tbody>
            </Grid>
          </Panel>
          <DockHead $mt={4}><span>属性编辑框</span><Pin /><CloseX /></DockHead>
          <Panel $border $flex="1">
            <Grid $w={178} $m="0 0 0 1px">
              <colgroup><col width="83" /><col width="64" /><col width="31" /></colgroup>
              <thead>
                <tr><HeadCell $left $h={22}>属性名称</HeadCell><HeadCell $left $hot $h={22}>属性值</HeadCell><HeadCell $left $h={22}>附加</HeadCell></tr>
              </thead>
              <tbody>
                {props.map(p => (
                  <PropRow key={p[0]} $h={21}>
                    <PropName $c={p[2]}>{p[0]}</PropName>
                    <PropVal $gray={p[3] === 'gray'} $on={p[3] === 'mono'}>
                      {p[3] === 'mono' ? <Mono>{p[1]}</Mono> : p[1]}
                    </PropVal>
                    <PropChk>{p[4] && <Check />}</PropChk>
                  </PropRow>
                ))}
                {['计算属性', '显示样式'].map(t => (
                  <PropRow key={t} $h={19}>
                    <PropName $tree><Expand />{t}</PropName><PropVal /><PropChk />
                  </PropRow>
                ))}
              </tbody>
            </Grid>
          </Panel>
        </Column>

        <Column $w={848} $ml={2}>
          <BandRow $h={28} $mt={1}>
            <Band $w={496}>
              <Grip />
              <Select w={56} ml={4}>首层</Select>
              <Select w={68} ml={4}>自定义</Select>
              <Select w={68} ml={4}>自定义线</Select>
              <Select w={68} ml={4}>ZDYX-3</Select>
              <Sep $ml={4} />
              <ActiveTool $w={51} $ml={3}><Icon n="attr" />属性</ActiveTool>
              <ActiveTool $w={75} $ml={1}><Icon n="clist" />构件列表</ActiveTool>
              <Tool $ml={4} $gap={2}><Icon n="drop" />拾取构件</Tool>
            </Band>
            <Band $w={333}>
              <Grip $ml={1} />
              <Tool $ml={2}><Icon n="two" />两点</Tool>
              <Tool $ml={7}><Icon n="para" />平行</Tool>
              <Tool $ml={7}><Icon n="lenmark" />长度标注</Tool>
              <Tool $ml={7}><Icon n="alignmark" />对齐标注</Tool>
              <Tool $ml={7}><Icon n="measure" />测量距离</Tool>
            </Band>
          </BandRow>
          <BandRow $h={30}>
            <Band $w={479}>
              <Grip $ml={1} />
              <ActiveTool $w={51} $ml={1} $gap={7}><Icon n="pick" />选择</ActiveTool><Caret $ml={1} />
              <Sep $ml={2} />
              <Tool $ml={6} $gap={3}><Icon n="line" />直线</Tool>
              <Tool $ml={8}><Icon n="addlen" />点加长度</Tool>
              <Tool $ml={7}><Icon n="arc" />三点画弧</Tool><Caret />
              <Select w={54} ml={2}>{' '}</Select>
              <Tool $ml={6} $gap={5}><Icon n="rect" />矩形</Tool>
              <Sep $ml={6} />
              <Tool $ml={5}><Icon n="dots" />智能布置</Tool><Caret />
            </Band>
          </BandRow>
          <CanvasRow>
            <VBar>
              <VGrip />
              <VIcon $mt={1}><Icon n="brush" /></VIcon>
              <VLine $mt={7} />
              <VIcon $mt={5}><Icon n="pts" /></VIcon>
              <VIcon $mt={6}><Icon n="mirror" /></VIcon>
              <VLine $mt={5} />
              <VIcon $mt={5}><Icon n="move" /></VIcon>
              <VIcon $mt={6}><Icon n="rot" /></VIcon>
              <VLine $mt={5} />
              <VIcon $mt={7}><Icon n="ext" /></VIcon>
              <VText $mt={1}>延</VText>
              <VFill />
              <VText>合<br />并</VText>
              <VIcon $mt={9}><Icon n="cut" /></VIcon>
              <VText $mt={2} $off>分<br />割</VText>
              <VLine $mt={5} />
              <VIcon $mt={8}><Icon n="alignL" /></VIcon>
              <VText $mt={1}>对<br />齐</VText>
              <VCaret />
              <VIcon $mt={10}><Icon n="offset" /></VIcon>
              <VText $mt={1}>偏<br />移</VText>
              <VMore viewBox="0 0 9 12"><path d="M1 1l3.5 4L8 1M1 6l3.5 4L8 6" /></VMore>
            </VBar>
            <CadView />
          </CanvasRow>
          <BandRow $h={29}>
            <BottomBand $w={476}>
              <Grip />
              <OffsetSelect $w={56} $ml={5}><span>不偏移</span><ComboBtn><Chevron /></ComboBtn></OffsetSelect>
              <Sep $ml={4} />
              <Faint $ml={4}>X=</Faint>
              <Field w={55} ml={3} v="0" />
              <Faint $ml={4}>mm</Faint>
              <Faint $ml={4}>Y=</Faint>
              <Field w={56} ml={2} v="0" />
              <Faint $ml={3}>mm</Faint>
              <Sep $ml={3} />
              <Check $ml={3} />
              <Tool $ml={8}>旋转</Tool>
              <Field w={66} ml={5} v="0.000" />
              <Faint $ml={6}>°</Faint>
            </BottomBand>
            <BottomBand $w={315}>
              <Grip />
              <Tool $ml={6}><Icon n="ortho" />正交</Tool>
              <Tool $ml={7}><Icon n="cross" />交点</Tool>
              <ActiveTool $w={52} $ml={3}><Icon n="perp" />垂点</ActiveTool>
              <ActiveTool $w={50} $gap={6}><Icon n="mid" />中点</ActiveTool>
              <Tool $ml={4} $gap={5}><Icon n="vertex" />顶点</Tool>
              <Tool $ml={5}><Icon n="coord" />坐标</Tool>
            </BottomBand>
          </BandRow>
        </Column>
      </Workspace>

      <StatusBar>
        <StatusCell $w={148}><StatusMono>X=10959 Y=93</StatusMono></StatusCell>
        <StatusCell $w={80}>层高<StatusMono>:3m</StatusMono></StatusCell>
        <StatusCell $w={130}>建筑底标高<StatusMono>:-0.05m</StatusMono></StatusCell>
        <StatusCell $w={50}><StatusMono>0</StatusMono></StatusCell>
        <StatusCell $w={250} />
        <StatusCell $w={486} />
        <StatusCell $w={200} $last><StatusMono>857.3F</StatusMono></StatusCell>
      </StatusBar>

      <Taskbar>
        <StartBtn><WinLogo /></StartBtn>
        <SearchBox>
          <Cortana />
          <span>在这里输入你要搜索的内容</span>
          <svg width="14" height="20" viewBox="0 0 14 20"><rect x="4" y="1" width="6" height="11" rx="3" fill="none" stroke="#999" /><path d="M1 9c0 7 12 7 12 0M7 15v4M4 19h6" stroke="#999" fill="none" /></svg>
        </SearchBox>
        <Tile $ml={2}><Pic n="fan" /></Tile>
        <Tile><Pic n="swirl" /></Tile>
        <TileDivider />
        <Tile><Pic n="edge" /></Tile>
        <Tile><Pic n="store" /></Tile>
        <Tile><Pic n="files" /></Tile>
        <Tile $open><Pic n="gcloud" /></Tile>
        <Tile $open><Pic n="globe" /></Tile>
        <Tile $open><Pic n="gband" /></Tile>
        <Tile $open><Pic n="plus" /></Tile>
        <Tile $open><Pic n="note" /></Tile>
        <Tile $open $active><Pic n="app" /></Tile>
        <TrayBit $w={48} $ml={66}><span>12%</span><span>CPU使用</span></TrayBit>
        <TrayBit $w={16} $ml={18}>
          <svg width="14" height="8" viewBox="0 0 14 8"><path d="M1 7l6-6 6 6" stroke="#fff" fill="none" /></svg>
        </TrayBit>
        <TrayBit $w={16} $ml={7}>
          <svg width="16" height="10" viewBox="0 0 16 10"><rect x="2" y="1" width="12" height="8" fill="none" stroke="#fff" /><rect x="4" y="3" width="6" height="4" fill="#fff" /><path d="M14 4h2v2h-2" fill="#fff" /></svg>
        </TrayBit>
        <TrayBit $w={16} $ml={10}>
          <svg width="14" height="14" viewBox="0 0 14 14"><path d="M1 13c0-7 5-12 12-12M4 13c0-5 4-9 9-9M7 13c0-3 3-6 6-6" stroke="#ccc" fill="none" /><circle cx="12" cy="12" r="1.5" fill="#fff" /></svg>
        </TrayBit>
        <TrayBit $w={16} $ml={5}>
          <svg width="16" height="14" viewBox="0 0 16 14"><path d="M1 5h3l4-4v12L4 9H1z" fill="none" stroke="#fff" /><path d="M11 4c1 2 1 4 0 6M13 2c2 3 2 7 0 10" stroke="#888" fill="none" /></svg>
        </TrayBit>
        <TrayBit $w={14} $ml={10} $fs={14}>中</TrayBit>
        <SogouLogo $x={1215} $y={741} $s={14}>S</SogouLogo>
        <TrayBit $w={62} $ml={46} $fs={13} $lh={19}><span>9:11</span><span>2017/8/14</span></TrayBit>
        <TrayBit $w={22} $ml={14}>
          <svg width="22" height="24" viewBox="0 0 22 24"><path d="M1 1h15v12H7l-3 3v-3H1z" fill="#fff" /><path d="M4 4h9M4 7h9" stroke="#333" /></svg>
          <NotifCount>4</NotifCount>
        </TrayBit>
      </Taskbar>

      <Badge>61</Badge>

      <Dialog>
        <DialogTitle>构件转换<CloseX s={11} c="#111" /></DialogTitle>
        <DialogBody>
          <FormRow>转换构件:<FormSelect>挑檐<Chevron /></FormSelect></FormRow>
          <FormRow>
            <Check />
            <Tool $ml={3}>保留做法</Tool>
            <DialogBtn $ml={54}>确定</DialogBtn>
            <DialogBtn $ml={15}>取消</DialogBtn>
          </FormRow>
        </DialogBody>
      </Dialog>

      <ImeBar>
        <ImeGlyph $w={24}>中</ImeGlyph>
        <ImeGlyph $w={20}>°,</ImeGlyph>
        <ImeGlyph>
          <svg width="14" height="18" viewBox="0 0 14 18"><rect x="4" y="0" width="6" height="11" rx="3" fill="#1a78c8" /><path d="M1 8c0 6 12 6 12 0M7 14v3M3 17h8" stroke="#1a78c8" fill="none" /></svg>
        </ImeGlyph>
        <ImeGlyph>
          <svg width="17" height="12" viewBox="0 0 17 12"><rect x=".5" y=".5" width="16" height="11" rx="1" fill="none" stroke="#1a78c8" /><path d="M2 3h13M2 5.5h13" stroke="#1a78c8" strokeDasharray="1.5 1" /><path d="M4 9h9" stroke="#1a78c8" /></svg>
        </ImeGlyph>
        <ImeGlyph $w={26}>
          <svg width="18" height="14" viewBox="0 0 18 14"><circle cx="7" cy="3" r="3" fill="#b8c0c8" /><path d="M1 13c0-8 12-8 12 0z" fill="#b8c0c8" /><rect x="10" y="7" width="8" height="7" fill="#8a98a8" /></svg>
        </ImeGlyph>
        <ImeGlyph $w={18}>
          <svg width="14" height="14" viewBox="0 0 14 14"><path d="M4 0l3 2 3-2 4 3-2 3h-2v8H4V6H2L0 3z" fill="#1a78c8" /></svg>
        </ImeGlyph>
        <ImeGlyph $w={24}>
          <svg width="14" height="14" viewBox="0 0 14 14"><path d="M1 11l6-6c-1-3 2-5 5-4l-3 2 1 2 2 1 2-2c0 3-2 5-5 4l-6 6z" fill="#1a78c8" /></svg>
        </ImeGlyph>
      </ImeBar>
      <SogouLogo $x={1185} $y={702} $s={25}>S</SogouLogo>

      <Notes viewBox="0 0 1366 768" shapeRendering="crispEdges">
        <ellipse cx="679" cy="388.5" rx="225" ry="78" fill="none" stroke="#ff0000" strokeWidth="7" />
        <ellipse cx="792" cy="548" rx="112" ry="43" fill="none" stroke="#ff0000" strokeWidth="7" />
      </Notes>
    </Page>
  )
}
